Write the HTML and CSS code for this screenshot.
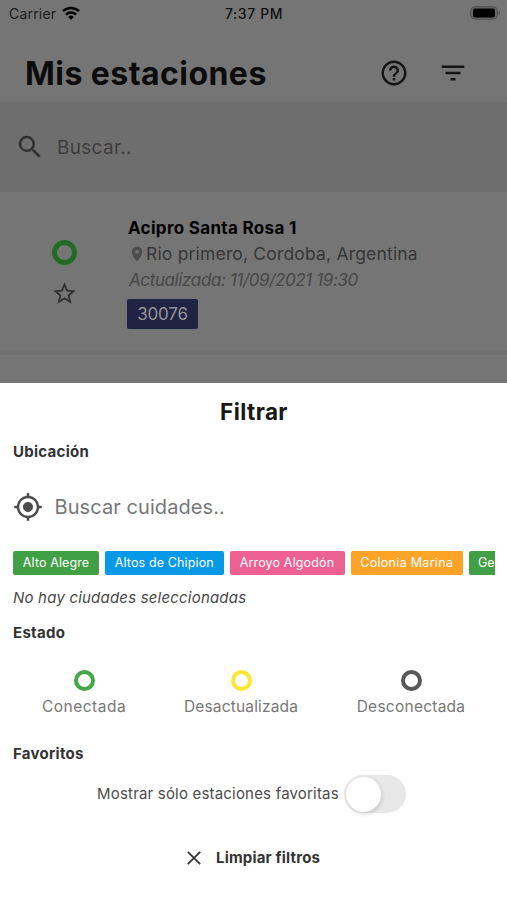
FILE: index.html
```html
<!DOCTYPE html>
<html lang="es">
<head>
<meta charset="utf-8">
<meta name="viewport" content="width=device-width, initial-scale=1">
<title>Mis estaciones</title>
<link rel="stylesheet" href="styles.css">
</head>
<body>
<div class="backdrop">
  <div class="status">
    <div class="carrier"><span>Carrier</span>
      <svg width="18" height="14" viewBox="0 0 18 14"><g fill="none" stroke="#000" stroke-width="2.500"><path d="M1 5.200a11.600 11.600 0 0 1 16 0"/><path d="M4 8.600a7.300 7.300 0 0 1 10 0"/></g><path d="M9 13.700 6.200 10.900a4 4 0 0 1 5.600 0Z"/></svg>
    </div>
    <div class="time">7:37 PM</div>
    <svg class="battery" width="31" height="14" viewBox="0 0 31 14"><rect x=".8" y=".8" width="26.500" height="12.400" rx="4" fill="#686868" stroke="#505050"/><rect x="3" y="2.600" width="22" height="9" rx="2"/><path d="M28.600 4.800c2 .9 2 3.500 0 4.400Z" fill="#505050"/></svg>
  </div>
  <header class="header">
    <h1>Mis estaciones</h1>
    <svg class="help" width="30" height="30" viewBox="0 0 24 24"><path d="M11 18h2v-2h-2v2zm1-16C6.480 2 2 6.480 2 12s4.480 10 10 10 10-4.480 10-10S17.520 2 12 2zm0 18c-4.410 0-8-3.590-8-8s3.590-8 8-8 8 3.590 8 8-3.590 8-8 8zm0-14c-2.210 0-4 1.790-4 4h2c0-1.100.9-2 2-2s2 .9 2 2c0 2-3 1.750-3 5h2c0-2.250 3-2.500 3-5 0-2.210-1.790-4-4-4z"/></svg>
    <svg class="menu" width="30" height="30" viewBox="0 0 24 24"><path d="M10 18h4v-2h-4v2zM3 6v2h18V6H3zm3 7h12v-2H6v2z"/></svg>
  </header>
  <div class="search">
    <svg width="30" height="30" viewBox="0 0 24 24"><path d="M15.500 14h-.79l-.28-.27A6.471 6.471 0 0 0 16 9.500 6.500 6.500 0 1 0 9.500 16c1.610 0 3.090-.59 4.230-1.570l.27.28v.79l5 4.990L20.490 19l-4.990-5zm-6 0C7.010 14 5 11.990 5 9.500S7.010 5 9.500 5 14 7.010 14 9.500 11.990 14 9.500 14z"/></svg>
    <span>Buscar..</span>
  </div>
  <div class="station">
    <div class="marks">
      <i class="ring ring-big"></i>
      <svg width="27" height="27" viewBox="0 0 24 24"><path d="M22 9.240l-7.190-.62L12 2 9.190 8.630 2 9.240l5.460 4.730L5.820 21 12 17.270 18.180 21l-1.630-7.030L22 9.240zM12 15.400l-3.760 2.270 1-4.280-3.320-2.880 4.380-.38L12 6.100l1.710 4.040 4.380.38-3.320 2.880 1 4.280L12 15.400z"/></svg>
    </div>
    <div class="info">
      <div class="name">Acipro Santa Rosa 1</div>
      <div class="place"><svg width="12" height="16" viewBox="0 0 12 16"><path d="M6 .5a5.300 5.300 0 0 0-5.300 5.300C.7 9.700 6 15.500 6 15.500s5.300-5.800 5.300-9.700A5.300 5.300 0 0 0 6 .5Zm0 7.200a1.900 1.900 0 1 1 0-3.800 1.900 1.900 0 0 1 0 3.800Z"/></svg><span>Rio primero, Cordoba, Argentina</span></div>
      <div class="updated">Actualizada: 11/09/2021 19:30</div>
      <div class="code"><span>30076</span></div>
    </div>
  </div>
</div>
<section class="sheet">
  <h2><span>Filtrar</span></h2>
  <h3 class="t-ubi">Ubicación</h3>
  <div class="city">
    <svg width="30" height="30" viewBox="0 0 24 24"><path d="M12 8c-2.210 0-4 1.790-4 4s1.790 4 4 4 4-1.790 4-4-1.790-4-4-4zm8.940 3A8.994 8.994 0 0 0 13 3.060V1h-2v2.060A8.994 8.994 0 0 0 3.060 11H1v2h2.060A8.994 8.994 0 0 0 11 20.940V23h2v-2.060A8.994 8.994 0 0 0 20.940 13H23v-2h-2.060zM12 19c-3.870 0-7-3.130-7-7s3.130-7 7-7 7 3.130 7 7-3.130 7-7 7z"/></svg>
    <span>Buscar cuidades..</span>
  </div>
  <div class="chips">
    <span class="chip green c1">Alto Alegre</span>
    <span class="chip blue c2">Altos de Chipion</span>
    <span class="chip pink c3">Arroyo Algodón</span>
    <span class="chip orange c4">Colonia Marina</span>
    <span class="chip green c5">Ge</span>
  </div>
  <div class="none">No hay ciudades seleccionadas</div>
  <h3 class="t-est">Estado</h3>
  <div class="states">
    <div class="state s1"><i class="ring"></i><span>Conectada</span></div>
    <div class="state s2"><i class="ring yellow"></i><span>Desactualizada</span></div>
    <div class="state s3"><i class="ring gray"></i><span>Desconectada</span></div>
  </div>
  <h3 class="t-fav">Favoritos</h3>
  <div class="fav"><span>Mostrar sólo estaciones favoritas</span><div class="toggle"><i></i></div></div>
  <div class="clear">
    <svg width="14" height="14" viewBox="0 0 14 14"><path d="M.8.8l12.400 12.400M13.200.8.8 13.200" fill="none" stroke="#333" stroke-width="1.700"/></svg>
    <span>Limpiar filtros</span>
  </div>
</section>
</body>
</html>
```
FILE: styles.css
```css
* { box-sizing: border-box; }
body { margin: 0; width: 507px; height: 900px; overflow: hidden; background: #fff; font-family: Inter, "Open Sans", sans-serif; white-space: nowrap; }
svg { display: block; flex: none; }
h1, h2, h3 { margin: 0; }
.backdrop { height: 383px; background: #757575; overflow: hidden; }
.status { height: 28px; display: grid; grid-template-columns: 1fr auto 1fr; align-items: center; padding: 0 6px 2px 9px; font-size: 14px; color: #080808; }
.carrier { display: flex; align-items: center; gap: 6px; color: #1c1c1c; letter-spacing: .2px; }
.carrier svg { margin-top: -1px; }
.time { font-weight: 500; color: #111; letter-spacing: .6px; margin-right: 2px; }
.battery { justify-self: end; }
.header { height: 74px; padding: 0 39px 0 25px; display: flex; align-items: center; fill: #151515; }
h1 { flex: 1; font-size: 32px; line-height: 40px; font-weight: 700; letter-spacing: .45px; color: #0c0c0c; padding-top: 17px; }
.help { margin: 15px 29px 0 0; }
.menu { margin-top: 15px; }
.search { height: 90px; background: #6e6e6e; display: flex; align-items: center; gap: 12px; padding: 0 15px; font-size: 19px; letter-spacing: .3px; color: #3d3d3d; fill: #303030; }
.station { height: 163px; display: flex; border-bottom: 5px solid #717171; }
.marks { width: 128px; display: flex; flex-direction: column; align-items: center; padding-top: 48px; gap: 15px; fill: #303030; }
.ring { display: block; width: 21px; height: 21px; border: 4.500px solid #45a749; border-radius: 50%; }
.ring-big { width: 25px; height: 25px; border: 5px solid #216c24; }
.info { padding-top: 23px; font-size: 17px; line-height: 26px; }
.name { font-weight: 700; color: #000; letter-spacing: .32px; }
.place { display: flex; align-items: center; gap: 3px; padding-left: 3px; color: #373737; fill: #4d4d4d; font-size: 17.500px; letter-spacing: .18px; }
.updated { font-style: italic; color: #484848; letter-spacing: -.38px; padding-left: 1px; }
.code { width: 71px; height: 30px; margin: 6px 0 0 -1px; border-radius: 2px; background: #212344; color: #949494; display: flex; align-items: center; justify-content: center; letter-spacing: -.2px; }
.sheet { height: 517px; padding: 0 12px 0 13px; background: #fff; color: #333; }
h2 { padding-top: 14px; font-size: 22.500px; line-height: 30px; text-align: center; font-weight: 700; color: #181818; letter-spacing: .4px; }
h3 { font-size: 15px; line-height: 20px; font-weight: 700; color: #333; letter-spacing: .28px; }
.t-ubi { margin-top: 15px; }
.city { display: flex; align-items: center; height: 60px; margin-top: 15px; gap: 11.500px; font-size: 20px; color: #777; fill: #4d4d4d; letter-spacing: .08px; }
.chips { display: flex; gap: 6px; height: 24px; margin-top: 14px; overflow: hidden; }
.chip { flex: none; height: 24px; line-height: 24px; border-radius: 2px; color: #fff; font-size: 12.500px; text-align: center; }
.c1 { width: 86px; letter-spacing: .1px; } .c2 { width: 118.500px; letter-spacing: .13px; } .c3 { width: 115px; letter-spacing: .15px; } .c4 { width: 112.500px; letter-spacing: .3px; } .c5 { width: 26px; padding-left: 9px; text-align: left; border-radius: 2px 0 0 2px; }
.green { background: #419f45; } .blue { background: #0799e5; } .pink { background: #ed6092; } .orange { background: #fda428; }
.none { margin-top: 13px; font-size: 15px; line-height: 20px; font-style: italic; color: #484848; letter-spacing: .2px; }
.t-est { margin-top: 15px; }
.states { display: flex; margin-top: 27px; height: 47px; font-size: 15.500px; line-height: 20px; color: #777; }
.state { display: flex; flex-direction: column; align-items: center; gap: 6px; }
.s1 { width: 142px; letter-spacing: .5px; } .s2 { width: 172px; letter-spacing: .17px; } .s3 { width: 168px; letter-spacing: .25px; }
.yellow { border-color: #fde736; } .gray { border-color: #585858; }
.t-fav { margin-top: 27px; }
.fav { display: flex; align-items: center; margin-top: 10px; height: 40px; padding-left: 84px; font-size: 15px; color: #4b4b4b; letter-spacing: .19px; }
.fav span { width: 247px; padding-bottom: 2px; }
.toggle { width: 62px; height: 38px; border-radius: 19px; background: #e8e8e8; padding: 1.500px; }
.toggle i { display: block; width: 35px; height: 35px; border-radius: 50%; background: #fff; box-shadow: 1px 2px 4px rgba(0,0,0,.15); }
.clear { display: flex; align-items: center; height: 30px; margin-top: 29px; padding-left: 174px; gap: 15px; font-size: 15px; font-weight: 700; letter-spacing: .18px; }
.clear span { padding-bottom: 1px; }
```
